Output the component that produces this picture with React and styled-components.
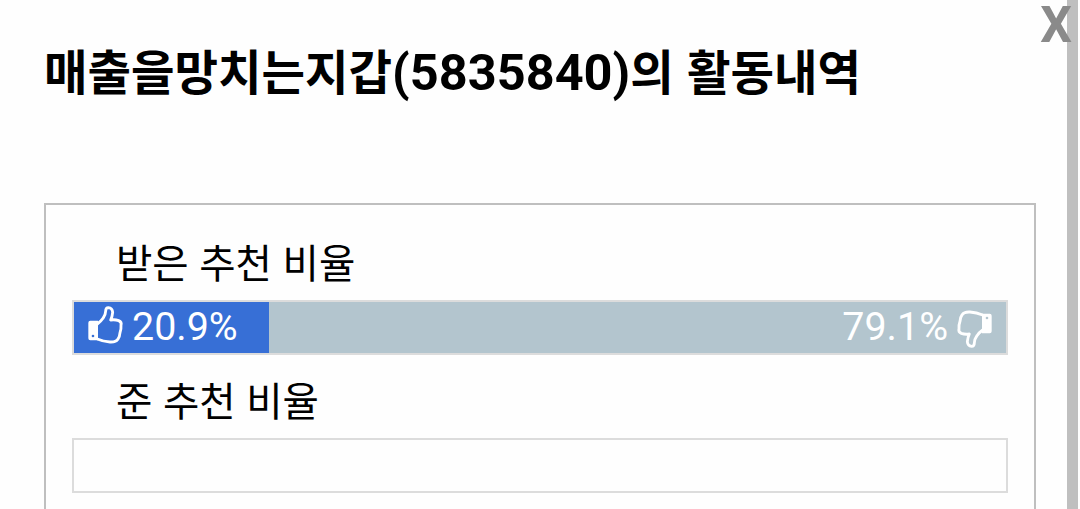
import React from 'react';
import styled, { createGlobalStyle } from 'styled-components';

const GlobalStyle = createGlobalStyle`
  * {
    margin: 0;
    padding: 0;
    box-sizing: border-box;
  }

  body {
    background-color: #fefefe;
    color: #000;
    font-family: Roboto, 'Noto Sans CJK KR', sans-serif;
    overflow: hidden;
  }
`;

const ratios = [
  { label: '받은 추천 비율', up: 20.9, down: 79.1 },
  { label: '준 추천 비율' },
];

const Thumb = ({ down }) => (
  <ThumbSvg viewBox="80 44 111 117" $down={down}>
    <path
      d="M111 101 Q122 93 128 84 Q136 73 136 62 Q136 52 144 52 Q156 53 157 66 Q156 78 151 89 Q164 87 175 91 Q185 95 182 105 Q183 116 179 127 Q178 140 173 146 Q167 156 149 155 Q129 154 111 146"
      fill="none"
      stroke="currentColor"
      strokeWidth="8.5"
      strokeLinejoin="round"
    />
    <path
      d="M90 91 H113 V150 H90 Q84 150 84 144 V97 Q84 91 90 91 Z M98 133 A4 4 0 1 0 98 141 A4 4 0 1 0 98 133 Z"
      fill="currentColor"
      fillRule="evenodd"
    />
  </ThumbSvg>
);

const App = () => {
  return (
    <>
      <GlobalStyle />
      <Page>
        <Content>
          <Title>
            매출을망치는지갑<Digits>(5835840)</Digits>의 활동내역
          </Title>
          <Panel>
            {ratios.map((ratio) => (
              <React.Fragment key={ratio.label}>
                <Label>{ratio.label}</Label>
                <Bar>
                  {ratio.up !== undefined && (
                    <>
                      <UpShare style={{ width: `${ratio.up}%` }}>
                        <Thumb />
                        <span>{ratio.up}%</span>
                      </UpShare>
                      <DownShare>
                        <span>{ratio.down}%</span>
                        <Thumb down />
                      </DownShare>
                    </>
                  )}
                </Bar>
              </React.Fragment>
            ))}
          </Panel>
        </Content>
        <Scrollbar />
        <CloseButton>X</CloseButton>
      </Page>
    </>
  );
};

// Dialog page, cut off at the bottom of the screen
const Page = styled.div`
  position: relative;
  display: flex;
  width: 1080px;
  height: 509px;
  padding-right: 2px;
  overflow: hidden;
`;

const Content = styled.div`
  flex: 1;
  padding: 43px 31px 0 44px;
`;

const Title = styled.h1`
  height: 160px;
  font-size: 47.3px;
  font-weight: 700;
  line-height: 60px;
  white-space: nowrap;
  word-spacing: 1.5px;
`;

const Digits = styled.span`
  font-size: 50.5px;
`;

const Panel = styled.div`
  height: 400px;
  padding: 12px 26px;
  border: 2px solid #bfbfbf;
`;

const Label = styled.div`
  height: 83px;
  padding: 18px 0 0 44px;
  font-size: 39.5px;
  line-height: 60px;
  white-space: nowrap;
  word-spacing: 0.8px;
`;

const Bar = styled.div`
  display: flex;
  height: 55px;
  border: 2px solid #dcdcdc;
  font-size: 39.4px;
  line-height: 49px;
  color: #fff;
`;

const UpShare = styled.div`
  display: flex;
  align-items: flex-start;
  gap: 8px;
  padding-left: 13px;
  background-color: #376fd6;
`;

const DownShare = styled.div`
  display: flex;
  flex: 1;
  align-items: flex-start;
  justify-content: flex-end;
  gap: 8px;
  padding-right: 13px;
  background-color: #b3c5ce;
`;

const ThumbSvg = styled.svg`
  width: 37px;
  height: 39px;
  margin-top: ${(props) => (props.$down ? '8px' : '3px')};
  transform: ${(props) => (props.$down ? 'rotate(180deg)' : 'none')};
`;

const Scrollbar = styled.div`
  width: 11px;
  background-color: #bfbfbf;
`;

// Sits over the scrollbar edge
const CloseButton = styled.button`
  position: absolute;
  top: 0;
  right: 8px;
  border: none;
  background: none;
  color: #8a8a8a;
  font-family: Roboto, sans-serif;
  font-size: 50px;
  font-weight: 700;
  line-height: 50px;
`;

export default App;
